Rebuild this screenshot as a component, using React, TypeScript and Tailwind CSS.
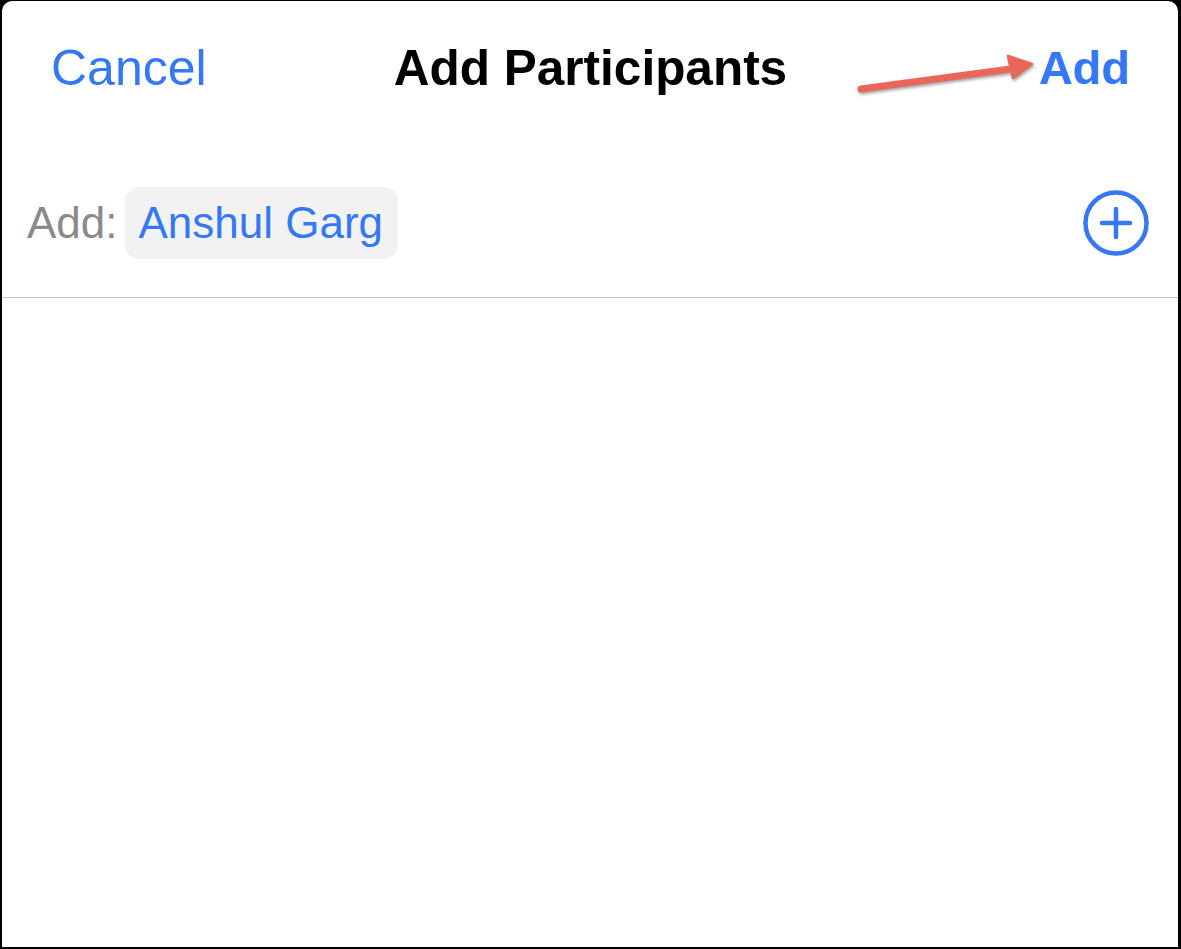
import React from "react";

export default function App() {
  return (
    <div
      className="w-[1181px] h-[949px] bg-black pl-[2px] pr-[3px] pt-[1px] pb-[2px] overflow-hidden"
      style={{ fontFamily: '"Liberation Sans", Arial, sans-serif' }}
    >
      <div className="relative w-full h-full bg-white rounded-t-[10px] flex flex-col">
        {/* Header */}
        <div className="h-[148px] grid grid-cols-[1fr_auto_1fr] items-start pt-[42px] pl-[49px] pr-[48px]">
          <div className="text-[50px] leading-[50px] text-[#3478f6] justify-self-start">Cancel</div>
          <div className="text-[49.5px] leading-[50px] font-bold text-black">Add Participants</div>
          <div className="text-[47px] leading-[50px] font-bold text-[#3478f6] justify-self-end">Add</div>
        </div>

        {/* Annotation arrow */}
        <svg
          className="absolute left-[840px] top-[40px] pointer-events-none"
          width="210"
          height="70"
          viewBox="840 40 210 70"
          style={{ filter: "drop-shadow(1px 2px 1.5px rgba(0,0,0,0.35))" }}
        >
          <line x1="859" y1="88" x2="1016" y2="67" stroke="#e8675a" strokeWidth="7" strokeLinecap="round" />
          <polygon points="1006,55 1030,63 1011,77" fill="#e8675a" stroke="#e8675a" strokeWidth="2.5" strokeLinejoin="round" />
        </svg>

        {/* Add row */}
        <div className="h-[148px] flex items-center pl-[25px] pr-[29px]">
          <span className="text-[44px] leading-[44px] text-[#8a8a8e]">Add:</span>
          <div className="ml-[7px] h-[72px] rounded-[14px] bg-[#f2f2f2] flex items-center pl-[14px] pr-[15px]">
            <span className="text-[44px] leading-[44px] text-[#3478f6]">Anshul Garg</span>
          </div>
          <div className="flex-1" />
          <svg width="66" height="66" viewBox="0 0 66 66">
            <circle cx="33" cy="33" r="30.5" fill="none" stroke="#3478f6" strokeWidth="4.5" />
            <line x1="19" y1="33" x2="47" y2="33" stroke="#3478f6" strokeWidth="4.5" strokeLinecap="round" />
            <line x1="33" y1="19" x2="33" y2="47" stroke="#3478f6" strokeWidth="4.5" strokeLinecap="round" />
          </svg>
        </div>
        <div className="h-px bg-[#c8c8ca]" />
        <div className="flex-1" />
      </div>
    </div>
  );
}
